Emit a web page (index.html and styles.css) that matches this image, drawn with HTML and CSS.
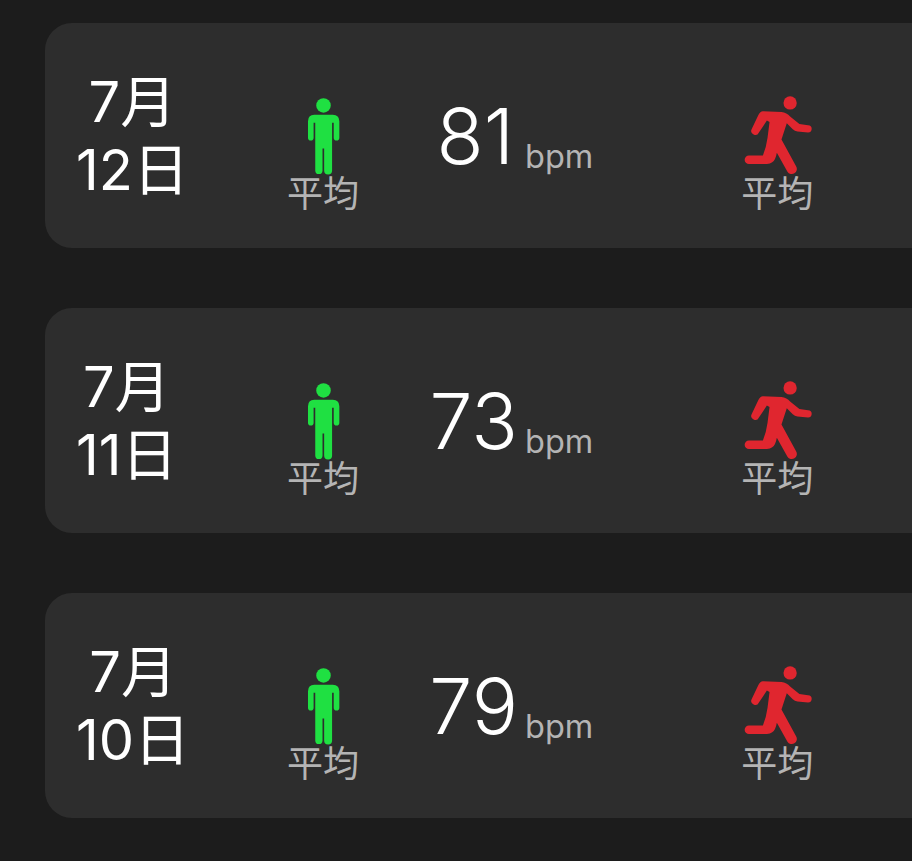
FILE: index.html
```html
<!DOCTYPE html>
<html lang="ja">
<head>
<meta charset="utf-8">
<title>心拍数</title>
<link rel="stylesheet" href="styles.css">
</head>
<body>
<svg class="defs" width="0" height="0" aria-hidden="true">
  <symbol id="rest" viewBox="80 35 100 235">
    <circle cx="130" cy="60" r="22"/>
    <path d="M102 88H158Q178 88 178 108V158A8.5 8.5 0 0 1 161 158V112H156V257A12 12 0 0 1 132 257V190H127V257A11 11 0 0 1 105 257V112H100V158A8.5 8.5 0 0 1 83 158V108Q83 88 102 88Z"/>
  </symbol>
  <symbol id="run" viewBox="30 25 220 250">
    <circle cx="178" cy="55" r="20"/>
    <path d="M96 80L152 82Q168 84 178 96L206 118L232 122A11 11 0 0 1 232 144L200 141Q192 140 186 134L168 116L152 165L196 246A14 14 0 0 1 170 262L138 205Q134 228 124 234Q118 239 108 239H54A13 13 0 0 1 54 213H96Q106 190 110 160L116 112L108 108L84 144A11 11 0 0 1 62 134L82 92Q88 80 96 80Z"/>
  </symbol>
</svg>
<main class="list">
  <section class="card">
    <div class="date-col"><div class="date">7月<br>12日</div></div>
    <div class="status"><svg class="icon rest"><use href="#rest"/></svg><span class="label">平均</span></div>
    <div class="value-col"><span class="value value-one">81</span></div><span class="unit">bpm</span>
    <div class="status run-status"><svg class="icon run"><use href="#run"/></svg><span class="label">平均</span></div>
  </section>
  <section class="card">
    <div class="date-col"><div class="date">7月<br>11日</div></div>
    <div class="status"><svg class="icon rest"><use href="#rest"/></svg><span class="label">平均</span></div>
    <div class="value-col"><span class="value">73</span></div><span class="unit">bpm</span>
    <div class="status run-status"><svg class="icon run"><use href="#run"/></svg><span class="label">平均</span></div>
  </section>
  <section class="card">
    <div class="date-col"><div class="date">7月<br>10日</div></div>
    <div class="status"><svg class="icon rest"><use href="#rest"/></svg><span class="label">平均</span></div>
    <div class="value-col"><span class="value">79</span></div><span class="unit">bpm</span>
    <div class="status run-status"><svg class="icon run"><use href="#run"/></svg><span class="label">平均</span></div>
  </section>
</main>
</body>
</html>
```
FILE: styles.css
```css
html, body {
  margin: 0;
  height: 861px;
  overflow: hidden;
  background: #1c1c1c;
  font-family: Inter, "Noto Sans CJK JP", sans-serif;
}
.defs { position: absolute; }
.list {
  display: flex;
  flex-direction: column;
  gap: 60px;
  padding: 23px 0 0 45px;
  width: 1100px;
}
.card {
  display: flex;
  align-items: flex-start;
  height: 225px;
  padding-left: 31px;
  background: #2d2d2d;
  border-radius: 27px;
}
.date-col { flex: 0 0 212px; padding-top: 45px; }
.date {
  display: inline-block;
  text-align: center;
  color: #fff;
  font-size: 56px;
  line-height: 68px;
}
.status {
  flex: 0 0 70px;
  width: 70px;
  display: flex;
  flex-direction: column;
  align-items: center;
  padding-top: 74px;
}
.icon { display: block; fill: currentColor; }
.rest { width: 33px; height: 78px; color: #1fe042; }
.run { width: 73px; height: 83px; margin: -4px 0 -1px; color: #e0262f; }
.label {
  color: #b4b4b4;
  font-size: 36px;
  line-height: 40px;
  margin-top: -1px;
  white-space: nowrap;
}
.value-col { flex: 0 0 160px; text-align: right; padding-top: 68px; }
.value {
  color: #fff;
  font-size: 77px;
  font-weight: 300;
  line-height: 90px;
}
.value-one { margin-right: 4px; }
.unit {
  margin: 110px 0 0 7px;
  flex: 0 0 67px;
  color: #b4b4b4;
  font-size: 32.5px;
  line-height: 48px;
}
.run-status { margin-left: 149px; }
```
